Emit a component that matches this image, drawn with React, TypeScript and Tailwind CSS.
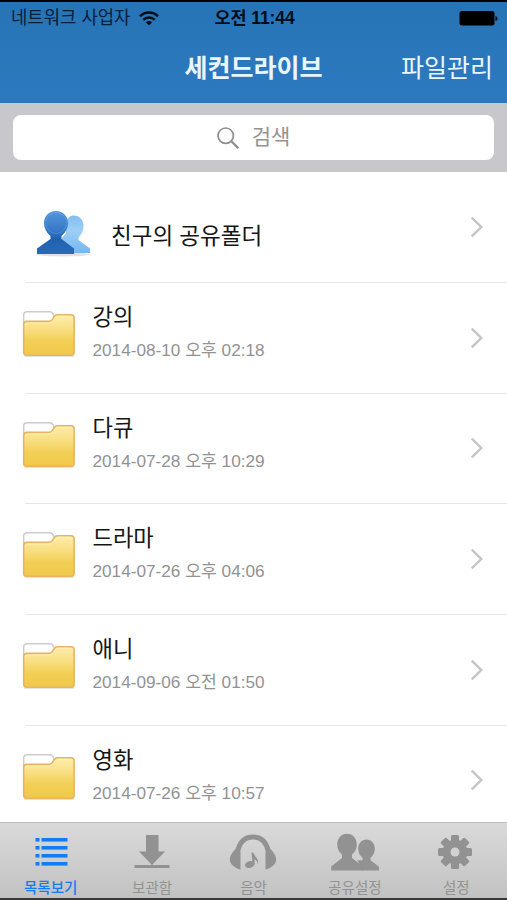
import type { ReactNode } from "react";
import clsx from "clsx";

const folders = [
    { name: "강의", date: "2014-08-10 오후 02:18" },
    { name: "다큐", date: "2014-07-28 오후 10:29" },
    { name: "드라마", date: "2014-07-26 오후 04:06" },
    { name: "애니", date: "2014-09-06 오전 01:50" },
    { name: "영화", date: "2014-07-26 오후 10:57" },
];

const WifiIcon = () => (
    <svg className="ml-[9px] h-[15px] w-[20px]" viewBox="0 0 20 15" fill="none" stroke="#020d18" strokeWidth="2.5">
        <path d="M1 5.3A12.7 12.7 0 0 1 19 5.3" />
        <path d="M4.3 8.8a8 8 0 0 1 11.4 0" />
        <path d="M6.9 11.3a4.4 4.4 0 0 1 6.2 0L10 14.4z" fill="#020d18" stroke="none" />
    </svg>
);

const BatteryIcon = () => (
    <svg className="h-[15px] w-[39px]" viewBox="0 0 39 15">
        <rect x="0.5" width="35" height="14.5" rx="2.5" />
        <path d="M36.5 5v5q2-.5 2-2.5t-2-2.5" />
    </svg>
);

const Chevron = () => (
    <svg className="h-[22px] w-[14px]" viewBox="0 0 14 22" fill="none" stroke="#c5c5c7" strokeWidth="2.4">
        <path d="M1.7 1.7L11.3 11 1.7 20.3" />
    </svg>
);

const FolderIcon = () => (
    <svg className="h-[50px] w-[54px] shrink-0" viewBox="0 0 54 50">
        <defs>
            <linearGradient id="folder" x1="0" y1="0" x2="0" y2="1">
                <stop offset="0" stopColor="#fdeeac" />
                <stop offset="0.35" stopColor="#f9df83" />
                <stop offset="0.65" stopColor="#f2cf55" />
                <stop offset="1" stopColor="#f0c94a" />
            </linearGradient>
        </defs>
        <rect x="2" y="44" width="50" height="3" rx="1.5" fill="#e3e3e3" />
        <path d="M1.7 14V5q0-3.2 3.2-3.2h22.6q2.4 0 3.6 2l1 2V14z" fill="#fff" stroke="#cbcbd0" strokeWidth="1.4" />
        <path
            d="M1.7 14.2q0-2.8 3-2.8h22q2.4 0 3.7-2l1.7-2.6q1.2-2 3.4-2h13.6q3 0 3 3v34.4q0 3-3 3H4.7q-3 0-3-3z"
            fill="url(#folder)"
            stroke="#e8b461"
            strokeWidth="1.6"
        />
        <path d="M3.2 15.5q0-2.5 2.5-2.5h22q2.5 0 4-2.5l1.5-2.5q1-1.7 2.8-1.7h12q2.4 0 2.4 2.4" fill="none" stroke="#fff3bd" opacity=".8" />
    </svg>
);

const FriendsIcon = () => (
    <svg className="h-[50px] w-[56px] shrink-0" viewBox="0 0 56 50">
        <defs>
            <linearGradient id="front" x1="0" y1="0" x2="0" y2="1">
                <stop offset="0" stopColor="#5596dc" />
                <stop offset="0.45" stopColor="#3679c8" />
                <stop offset="0.65" stopColor="#2160ae" />
                <stop offset="1" stopColor="#286bbb" />
            </linearGradient>
            <linearGradient id="back" x1="0" y1="0" x2="0" y2="1">
                <stop offset="0" stopColor="#82bdf0" />
                <stop offset="0.4" stopColor="#9dcff8" />
                <stop offset="1" stopColor="#75b7f1" />
            </linearGradient>
        </defs>
        <ellipse cx="27" cy="44.5" rx="26" ry="2" fill="#e2e2e2" />
        <path
            d="M37.5 5.5c6 0 10 4.500 10 10.500 0 5-2.200 8.700-5 11.500v2.500L54 38.500V43H26V28l4-5V12c1.500-4 4-6.500 7.500-6.500z"
            fill="url(#back)"
        />
        <path
            d="M20 1c7 0 12 5 12 12 0 5.800-3 10-6.500 13v3L38 38.500V44H1v-5.500L14.500 29v-3C11 23 8 18.800 8 13 8 6 13 1 20 1z"
            fill="url(#front)"
        />
        <circle cx="20" cy="13" r="10.5" fill="none" stroke="#7db0e8" opacity=".35" />
    </svg>
);

const ListIcon = () => (
    <svg className="ml-px h-[28px] w-[33px]" viewBox="0 0 33 28" fill="#147cf3">
        {[0, 8, 16, 24].map((y) => (
            <g key={y}>
                <rect x="0.5" y={y} width="4" height="3.6" />
                <rect x="6.5" y={y} width="26" height="3.6" />
            </g>
        ))}
    </svg>
);

const DownloadIcon = () => (
    <svg className="h-[36px] w-[36px]" viewBox="0 0 36 36" fill="#929292">
        <path d="M12 1h12.5v16.5h6.500L18 31 5 17.500h7z" />
        <rect x="0.5" y="31" width="35" height="3" />
    </svg>
);

const MusicIcon = () => (
    <svg className="h-[38px] w-[48px]" viewBox="0 0 48 38">
        <path d="M8.500 19C10.500 9 16 4 24 4s13.500 5 15.500 15" fill="none" stroke="#929292" strokeWidth="5" />
        <path d="M6.500 16Q.8 22 .8 26.500q0 4 4.200 7 2.800 2.300 6.500 3V19z" fill="#929292" />
        <path d="M41.500 16q5.700 6 5.700 10.500 0 4-4.200 7-2.800 2.300-6.500 3V19z" fill="#929292" />
        <ellipse cx="20.800" cy="31.500" rx="4.800" ry="3.400" transform="rotate(-14 20.800 31.500)" fill="#929292" />
        <path d="M22.500 19.500h2c.5 4 5.800 5.500 4.500 11.500-.6-2.400-1.900-3.800-3.400-4.400V31h-2z" fill="#929292" />
    </svg>
);

const PeopleIcon = () => (
    <svg className="h-[38px] w-[50px]" viewBox="0 0 50 38" fill="#929292">
        <path d="M17 .8c5.700 0 9.800 4.700 9.800 10.700 0 4.300-1.800 7.500-4.800 10V25l11 8.500V37.500H1.200v-4L12 25v-3.500c-3-2.500-4.800-5.700-4.800-10C7.200 5.500 11.300.8 17 .8z" />
        <path d="M36.500 6.500c4.900 0 8.300 4 8.300 9.300 0 3.700-1.600 6.700-4.300 9v2.500L49 33.800v3.700H32L27.500 27.500l5-.2v-2.500c-2.700-2.300-4.300-5.300-4.300-9 0-5.300 3.400-9.300 8.300-9.300z" />
    </svg>
);

const GearIcon = () => (
    <svg className="mr-[2px] h-[36px] w-[36px]" viewBox="0 0 36 36">
        <g fill="#929292">
            {[0, 45, 90, 135].map((angle) => (
                <rect key={angle} x="14" y="1" width="8" height="34" rx="1.5" transform={`rotate(${angle} 18 18)`} />
            ))}
            <circle cx="18" cy="18" r="12.5" />
        </g>
        <circle cx="18" cy="18" r="4.5" fill="#d2d2d2" />
    </svg>
);

const tabs: { label: string; icon: ReactNode; active?: boolean }[] = [
    { label: "목록보기", icon: <ListIcon />, active: true },
    { label: "보관함", icon: <DownloadIcon /> },
    { label: "음악", icon: <MusicIcon /> },
    { label: "공유설정", icon: <PeopleIcon /> },
    { label: "설정", icon: <GearIcon /> },
];

const FolderRow = ({ name, date }: { name: string; date: string }) => (
    <li className="group h-[110.7px] shrink-0">
        <div className="ml-[25px] h-px bg-[#e6e6e8] group-first-of-type:bg-[#dedee0]" />
        <div className="flex pl-[22px]">
            <div className="pt-[27px]">
                <FolderIcon />
            </div>
            <div className="ml-[16.5px] flex-1 pt-[20px]">
                <h2 className="text-[22.2px] leading-[30px] text-[#151515]">{name}</h2>
                <p className="mt-[5px] text-[17.2px] leading-[24px] text-[#929292]">{date}</p>
            </div>
            <div className="pt-[43.500px] pr-[23px]">
                <Chevron />
            </div>
        </div>
    </li>
);

const App = () => {
    return (
        <div className="flex h-[900px] w-[507px] flex-col overflow-hidden bg-white font-['Liberation_Sans','Noto_Sans_CJK_KR',sans-serif]">
            <header className="h-[103px] shrink-0 border-t-2 border-black bg-linear-to-b from-[#2674b5] to-[#2d79c0]">
                <div className="grid h-[32px] grid-cols-3 items-center pr-[9px] pl-[11px] text-[17.8px] text-[#06203a]">
                    <div className="flex items-center whitespace-nowrap">
                        네트워크 사업자
                        <WifiIcon />
                    </div>
                    <div className="pt-px text-center text-[17.5px] font-bold tracking-[-0.1px] text-[#020d18]">오전 11:44</div>
                    <div className="flex justify-end">
                        <BatteryIcon />
                    </div>
                </div>
                <div className="grid h-[69px] grid-cols-[1fr_auto_1fr] items-center px-[14px] pt-px text-[25px] text-[#eaf6ff]">
                    <span />
                    <h1 className="font-bold">세컨드라이브</h1>
                    <button className="justify-self-end">파일관리</button>
                </div>
            </header>

            <div className="h-[69px] shrink-0 bg-[#c8c7cc] px-[13px] pt-[12px]">
                <div className="flex h-[45px] items-center justify-center gap-[13px] rounded-[8px] bg-white text-[21px] text-[#929296]">
                    <svg className="h-[22px] w-[22px]" viewBox="0 0 22 22" fill="none" stroke="#8e8e93">
                        <circle cx="8.7" cy="8.7" r="7.7" strokeWidth="1.7" />
                        <path d="M14.3 14.3l7 7" strokeWidth="2.3" />
                    </svg>
                    <span className="-mt-[2px]">검색</span>
                </div>
            </div>

            <ul className="flex min-h-0 flex-1 flex-col overflow-hidden">
                <li className="flex h-[110px] shrink-0 pl-[36px]">
                    <div className="pt-[38px]">
                        <FriendsIcon />
                    </div>
                    <h2 className="ml-[19px] flex-1 pt-[50px] text-[22.5px] leading-[30px] text-[#151515]">친구의 공유폴더</h2>
                    <div className="pt-[44px] pr-[23px]">
                        <Chevron />
                    </div>
                </li>
                {folders.map((folder) => (
                    <FolderRow key={folder.name} {...folder} />
                ))}
            </ul>

            <nav className="grid h-[78px] shrink-0 grid-cols-5 border-t border-b-2 border-t-[#bcbcbc] border-b-[#393939] bg-linear-to-b from-[#dadada] to-[#c2c2c2]">
                {tabs.map((tab) => (
                    <div key={tab.label} className="flex flex-col items-center">
                        <div className="flex h-[58px] items-center">{tab.icon}</div>
                        <span
                            className={clsx(
                                "-mt-[2px] text-[14.5px] leading-[18px] whitespace-nowrap",
                                tab.active ? "font-medium text-[#147cf3]" : "text-[#929292]"
                            )}
                        >
                            {tab.label}
                        </span>
                    </div>
                ))}
            </nav>
        </div>
    );
};

export default App;
